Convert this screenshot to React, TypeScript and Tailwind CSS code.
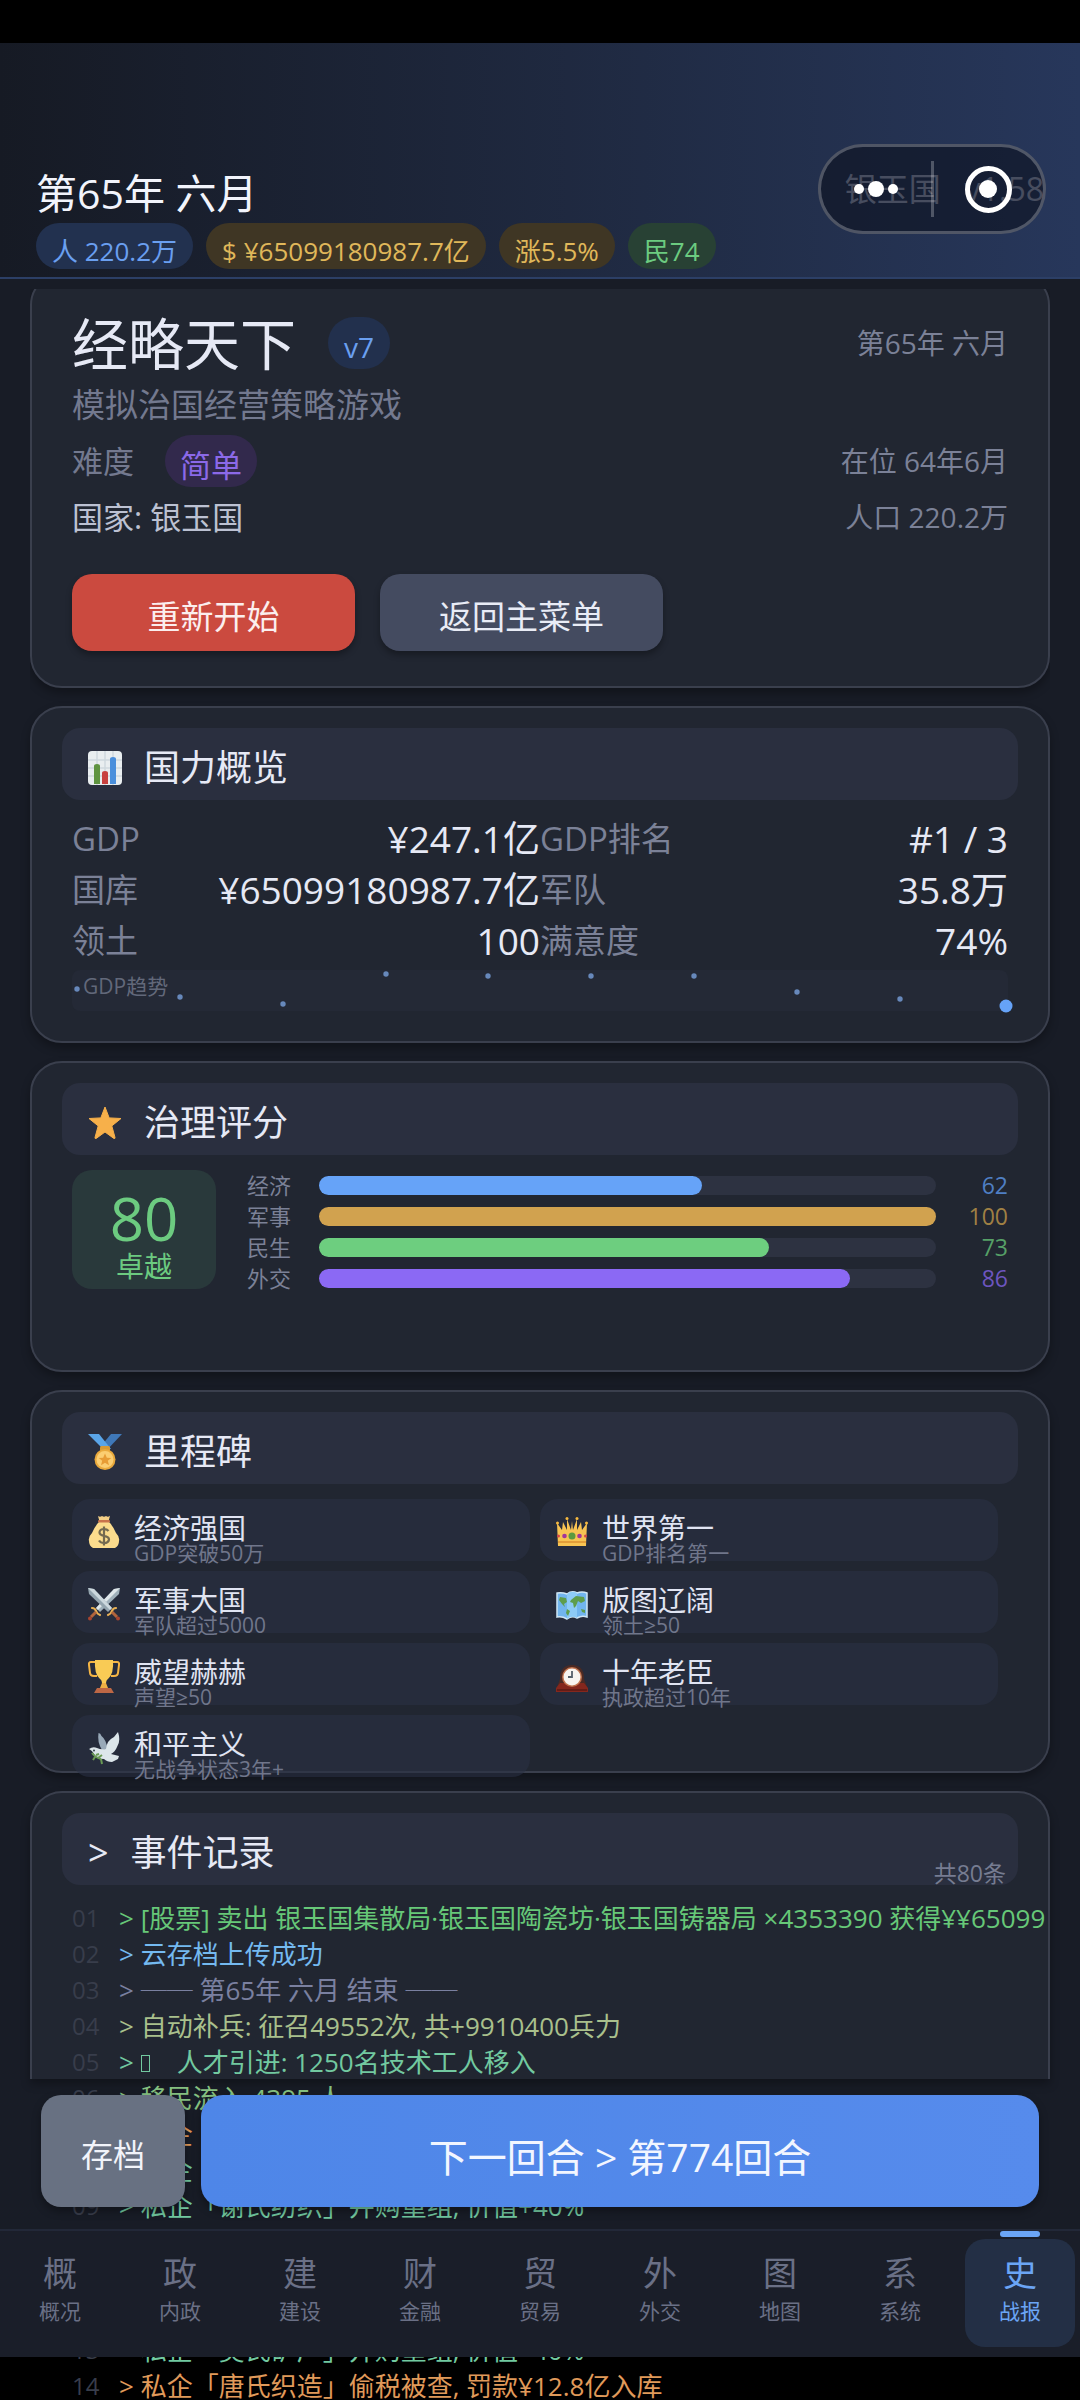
import type { ReactNode } from 'react'

const FONT = "font-['Open_Sans','Noto_Sans_CJK_SC',sans-serif]"

const pills = [
  { label: '人 220.2万', style: 'bg-[#22314f] text-[#6a9ff0]' },
  { label: '$ ¥65099180987.7亿', style: 'bg-[#3f3624] text-[#e0b85a]' },
  { label: '涨5.5%', style: 'bg-[#3f3624] text-[#e0b85a]' },
  { label: '民74', style: 'bg-[#284134] text-[#6ccb80]' },
]

const stats = [
  ['GDP', '¥247.1亿'],
  ['GDP排名', '#1 / 3'],
  ['国库', '¥65099180987.7亿'],
  ['军队', '35.8万'],
  ['领土', '100'],
  ['满意度', '74%'],
]

const trend = [
  [5, 19], [108, 27], [211, 34], [314, 4], [416, 6],
  [519, 6], [622, 6], [725, 22], [828, 29],
]

const scores = [
  { label: '经济', value: 62, bar: 'bg-[#66a3f8]', text: 'text-[#4f7fc4]' },
  { label: '军事', value: 100, bar: 'bg-[#d1a24f]', text: 'text-[#a08044]' },
  { label: '民生', value: 73, bar: 'bg-[#6dce7f]', text: 'text-[#56a067]' },
  { label: '外交', value: 86, bar: 'bg-[#8b69f4]', text: 'text-[#6d55bf]' },
]

const milestones = [
  { title: '经济强国', desc: 'GDP突破50万', icon: <MoneyBagIcon /> },
  { title: '世界第一', desc: 'GDP排名第一', icon: <CrownIcon /> },
  { title: '军事大国', desc: '军队超过5000', icon: <SwordsIcon /> },
  { title: '版图辽阔', desc: '领土≥50', icon: <MapIcon /> },
  { title: '威望赫赫', desc: '声望≥50', icon: <TrophyIcon /> },
  { title: '十年老臣', desc: '执政超过10年', icon: <ClockIcon /> },
  { title: '和平主义', desc: '无战争状态3年+', icon: <DoveIcon /> },
]

const GREEN = 'text-[#67c878]'
const BLUE = 'text-[#74b9f0]'
const GRAY = 'text-[#7a80a0]'
const OLIVE = 'text-[#a9c08c]'
const TEAL = 'text-[#72c9a0]'
const LIME = 'text-[#85c080]'
const ORANGE = 'text-[#e09a5a]'

const logs = [
  { text: '[股票] 卖出 银玉国集散局·银玉国陶瓷坊·银玉国铸器局 ×4353390 获得¥¥65099', color: GREEN },
  { text: '云存档上传成功', color: BLUE },
  { text: '── 第65年 六月 结束 ──', color: GRAY },
  { text: '自动补兵: 征召49552次, 共+9910400兵力', color: OLIVE },
  { text: '人才引进: 1250名技术工人移入', color: TEAL, missingGlyph: true },
  { text: '移民流入 4395 人', color: LIME },
  { text: '私企', color: ORANGE },
  { text: '私企', color: TEAL },
  { text: '私企「谢氏纺织」并购重组, 价值+40%', color: TEAL },
  { text: '', color: TEAL },
  { text: '', color: TEAL },
  { text: '', color: TEAL },
  { text: '私企「吴氏矿产」并购重组, 价值+40%', color: TEAL },
  { text: '私企「唐氏织造」偷税被查, 罚款¥12.8亿入库', color: ORANGE },
]

const tabs = [
  ['概', '概况'],
  ['政', '内政'],
  ['建', '建设'],
  ['财', '金融'],
  ['贸', '贸易'],
  ['外', '外交'],
  ['图', '地图'],
  ['系', '系统'],
  ['史', '战报'],
]

function ChartIcon() {
  return (
    <svg viewBox="0 0 34 34" className="size-[34px]" aria-hidden="true">
      <rect width="34" height="34" rx="4" fill="#e9eef0" />
      <path d="M0 9h34M0 17h34M0 25h34M9 0v34M17 0v34M25 0v34" stroke="#cfd9de" strokeWidth="1.5" />
      <path d="M6 33V15q0-2 3-2t3 2v18z" fill="#5f9441" />
      <path d="M14 33V22q0-2 3-2t3 2v11z" fill="#c8413f" />
      <path d="M22 33V8q0-2 3-2t3 2v25z" fill="#4a8fdc" />
    </svg>
  )
}

function StarIcon() {
  return (
    <svg viewBox="0 0 34 34" className="size-[34px]" aria-hidden="true">
      <path
        d="M17 1l4.200 10.900 11.800.6-9.200 7.400 3.200 11.600q.2 1.500-1.200.9L17 26l-8.800 6.400q-1.400.6-1.200-.9l3.200-11.600L1 12.500l11.800-.6z"
        fill="#f7b04a"
        stroke="#f7b04a"
        strokeLinejoin="round"
      />
    </svg>
  )
}

function MedalIcon() {
  return (
    <svg viewBox="0 0 34 36" className="h-9 w-[34px]" aria-hidden="true">
      <path d="M34 0H23L13 12l5 5z" fill="#3f78b8" />
      <path d="M0 0h11l12 15h-8z" fill="#5aa5e8" />
      <rect x="12" y="12" width="10" height="5" rx="1.5" fill="#d89a35" />
      <circle cx="17" cy="25.5" r="10.5" fill="#e9a93c" />
      <circle cx="17" cy="25.5" r="8.5" fill="#fbce72" />
      <path d="M17 19.500l1.800 4.200 4.500.3-3.500 2.800 1.200 4.400-4-2.400-4 2.400 1.200-4.400-3.500-2.800 4.500-.3z" fill="#e79c35" />
    </svg>
  )
}

function MoneyBagIcon() {
  return (
    <svg viewBox="0 0 32 34" className="h-[34px] w-8" aria-hidden="true">
      <path d="M10 1q2 1.500 4 0 2 1.500 4 0 2 1.500 4-.2l-1.500 5.700h-9z" fill="#f3cf86" />
      <path d="M11 7Q7 11 4 18q-4 4-3 8 0 5 4 7h22q4-2 4-7 1-4-3-8-3-7-7-11z" fill="#fbdc8d" />
      <rect x="10" y="5" width="12" height="2.500" rx="1.200" fill="#c9734c" />
      <path d="M20.500 16Q19 14 16 14q-4 0-4.500 3.200 0 2.800 4.500 3.600 5 .8 5 3.700-.5 3.500-5 3.500-3.500 0-5-2.500M16 11.500v19" fill="none" stroke="#746a50" strokeWidth="2.200" />
    </svg>
  )
}

function CrownIcon() {
  return (
    <svg viewBox="0 0 32 34" className="h-[34px] w-8" aria-hidden="true">
      <path d="M2 31L1 8l5 7 1-8 4 8 0-11 4 11 1-9 1 9 4-11 0 11 4-8 1 8 5-7-1 23z" fill="#f8c453" />
      <g fill="#f6b93f">
        <circle cx="1.5" cy="8" r="1.5" />
        <circle cx="11" cy="3.5" r="1.5" />
        <circle cx="21" cy="3.5" r="1.5" />
        <circle cx="30.5" cy="8" r="1.5" />
      </g>
      <path d="M2 27h28" stroke="#dc9231" strokeWidth="1.5" />
      <circle cx="16" cy="21" r="3.5" fill="#5c9a3f" />
      <circle cx="8.5" cy="21" r="2.3" fill="#a2359b" />
      <circle cx="23.5" cy="21" r="2.3" fill="#a2359b" />
      <circle cx="2.5" cy="21" r="1.5" fill="#d64848" />
      <circle cx="29.5" cy="21" r="1.5" fill="#d64848" />
    </svg>
  )
}

function SwordsIcon() {
  return (
    <svg viewBox="0 0 32 34" className="h-[34px] w-8" aria-hidden="true">
      <path d="M32 1l-1 6L12 25l-4-4L26 2z" fill="#9fb0ba" />
      <path d="M32 1L10 23l-2-2L26 2z" fill="#dfe7ea" />
      <path d="M0 1l1 6 19 18 4-4L6 2z" fill="#93a4ae" />
      <path d="M0 1l22 22 2-2L6 2z" fill="#ccd8dd" />
      <path d="M4 21q3 0 4 3t4 4M28 21q-3 0-4 3t-4 4" fill="none" stroke="#e8b055" strokeWidth="2.200" strokeLinecap="round" />
      <path d="M8 25l-5 5M24 25l5 5" stroke="#b0643c" strokeWidth="3" />
      <circle cx="2" cy="31.500" r="2" fill="#a8452f" />
      <circle cx="30" cy="31.500" r="2" fill="#a8452f" />
    </svg>
  )
}

function MapIcon() {
  return (
    <svg viewBox="0 0 32 34" className="h-[34px] w-8" aria-hidden="true">
      <path d="M1 6q5-1 10 1 5-4 10-1 5-2 10 0v24q-5-2-10 1-5-3-10 1-5-3-10-2z" fill="#71b5ee" stroke="#cfe6f5" strokeWidth="1.5" />
      <path d="M11 7q5-4 10-1v25q-5-3-10 1z" fill="#8dcbf7" />
      <path d="M4 10l6 1 1 4-3 2 1 3-3-3-3-4zM15 13l5-4 8 1 1 4-4 2-3-2-2 5-2 2-1-5-3-1zM11 22l3 2-2 5-2-3zM25 22l4 1v3l-3-1z" fill="#5e9d4c" />
    </svg>
  )
}

function TrophyIcon() {
  return (
    <svg viewBox="0 0 32 34" className="h-[34px] w-8" aria-hidden="true">
      <path d="M8 3H3Q.5 3 1 6l1 8q.3 3 4 3h3M24 3h5q2.500 0 2 3l-1 8q-.3 3-4 3h-3" fill="none" stroke="#f5b544" strokeWidth="2" />
      <path d="M7 1h18q1 14-5 19-2 1-2 5v3h-4v-3q0-4-2-5Q6 15 7 1z" fill="#f9cb55" />
      <path d="M14 24h4l2 5h-8z" fill="#eeb044" />
      <path d="M9 29h14l3 5H6z" fill="#bd6745" />
    </svg>
  )
}

function ClockIcon() {
  return (
    <svg viewBox="0 0 32 34" className="h-[34px] w-8" aria-hidden="true">
      <path d="M16 6q12 0 12 14l3 8H1l3-8Q4 6 16 6z" fill="#4b2a24" />
      <path d="M4 24h24l4 5v4H0v-4z" fill="#84271d" />
      <path d="M1 31h30" stroke="#5a1a14" strokeWidth="1.5" />
      <circle cx="16" cy="18" r="10" fill="#c0714c" />
      <circle cx="16" cy="18" r="8.5" fill="#f7f4f0" />
      <path d="M16 12v6h-4" fill="none" stroke="#55606a" strokeWidth="1.8" />
    </svg>
  )
}

function DoveIcon() {
  return (
    <svg viewBox="0 0 32 34" className="h-[34px] w-8" aria-hidden="true">
      <path d="M14 19Q9 11 10.500 2q2 0 3 3 5 4 6 13z" fill="#98a9b8" />
      <path d="M18 18q1-9 8-12l4-5q3 9-1 15-2 5-6 7l8 2-1 3-6 3q-5 0-8-3-8 0-10-5-1-3-5-5 4-3 8-1 4 2 9 1z" fill="#dce6ea" />
      <circle cx="6" cy="19.500" r="1" fill="#39444c" />
      <path d="M4 22q4 5 9 6M7 26l-2 3M10 27l4-3M13 28l1 5M8 24l3-1" fill="none" stroke="#6a9a55" strokeWidth="2" />
    </svg>
  )
}

function Card({ children, className = '' }: { children: ReactNode; className?: string }) {
  return (
    <section
      className={`shrink-0 border-2 border-[#3a3f4d] bg-[#212631] px-[30px] shadow-[0_5px_10px_rgba(0,0,0,0.3)] ${className}`}
    >
      {children}
    </section>
  )
}

function CardTitle({ icon, title, extra }: { icon: ReactNode; title: string; extra?: string }) {
  return (
    <div className="flex h-[72px] items-center gap-[22px] rounded-[18px] bg-[#2a2f3f] pl-[26px] pr-3 pt-2">
      {icon}
      <h2 className="text-[36px] leading-10 text-[#e6e9f5]">{title}</h2>
      {extra && <span className="ml-auto self-end text-[23px] leading-6 text-[#767c91]">{extra}</span>}
    </div>
  )
}

function Header() {
  return (
    <header className="relative border-b-2 border-[#2c3f66] bg-linear-to-r from-[#161a24] to-[#27375b] px-9 pb-2 pt-[126px]">
      <div className="flex items-start justify-between">
        <h1 className="text-[41px] leading-[48px] text-[#f2f4fc]">第65年 六月</h1>
        <p className="flex gap-6 text-[32px] leading-10 text-[#a0a7c0]">
          <span>银玉国</span>
          <span>v1.58</span>
        </p>
      </div>
      <ul className="mt-1.5 flex gap-[13px]">
        {pills.map(p => (
          <li key={p.label} className={`h-[46px] rounded-full px-4 pt-2 text-[26px] leading-10 ${p.style}`}>
            {p.label}
          </li>
        ))}
      </ul>
      <div className="absolute right-[34px] top-[101px] flex h-[90px] w-[228px] items-center rounded-full border-[3px] border-white/25 bg-[#0c101e]/60">
        <button type="button" aria-label="更多" className="flex flex-1 items-center justify-center gap-1">
          <i className="size-2.5 rounded-full bg-white" />
          <i className="size-4 rounded-full bg-white" />
          <i className="size-2.5 rounded-full bg-white" />
        </button>
        <i className="h-14 w-[3px] bg-white/25" />
        <button type="button" aria-label="关闭" className="flex flex-1 items-center justify-center">
          <span className="flex size-[47px] items-center justify-center rounded-full border-[5px] border-white">
            <i className="size-[18px] rounded-full bg-white" />
          </span>
        </button>
      </div>
    </header>
  )
}

function IntroCard() {
  return (
    <div className="shrink-0 overflow-hidden pb-4 -mb-4">
      <Card className="-mt-4 rounded-[32px] pb-[35px] pt-9">
        <div className="flex flex-col gap-2.5 px-2.5">
          <div className="flex h-16 items-center">
            <h2 className="text-[56px] leading-[64px] text-[#e6e9f5]">经略天下</h2>
            <span className="ml-8 h-[52px] rounded-full bg-[#22304d] px-4 pt-2 text-[28px] leading-[44px] text-[#6a9ff0]">v7</span>
            <span className="ml-auto text-[28px] leading-10 text-[#7b8197]">第65年 六月</span>
          </div>
          <p className="text-[33px] leading-10 text-[#73798f]">模拟治国经营策略游戏</p>
          <div className="flex items-center text-[31px]">
            <span className="text-[#73798f]">难度</span>
            <span className="ml-[31px] h-[52px] rounded-full bg-[#32294c] px-[15px] pt-2 leading-[44px] text-[#8b69e8]">简单</span>
            <span className="ml-auto text-[28px] leading-10 text-[#7b8197]">在位 64年6月</span>
          </div>
          <div className="flex items-center justify-between leading-10">
            <span className="text-[31px] text-[#bcc1d2]">国家: 银玉国</span>
            <span className="text-[28px] text-[#7b8197]">人口 220.2万</span>
          </div>
          <div className="mt-[27px] flex gap-[25px] text-[33px]">
            <button type="button" className="h-[77px] w-[283px] rounded-[20px] bg-[#cb4a3f] pt-2 text-[#fbeeee] shadow-[0_4px_6px_rgba(0,0,0,0.3)]">
              重新开始
            </button>
            <button type="button" className="h-[77px] w-[283px] rounded-[20px] bg-[#444b60] pt-2 text-[#e9ecf6] shadow-[0_4px_6px_rgba(0,0,0,0.3)]">
              返回主菜单
            </button>
          </div>
        </div>
      </Card>
    </div>
  )
}

function OverviewCard() {
  return (
    <Card className="rounded-[32px] pb-[30px] pt-5">
      <CardTitle icon={<ChartIcon />} title="国力概览" />
      <div className="px-2.5">
        <dl className="mt-[13px] grid grid-cols-2">
          {stats.map(([label, value]) => (
            <div key={label} className="flex h-[51px] items-center justify-between">
              <dt className="text-[33px] text-[#7b8197]">{label}</dt>
              <dd className="text-[37px] text-[#e6e9f5]">{value}</dd>
            </div>
          ))}
        </dl>
        <div className="relative mt-1 h-[41px] rounded-lg bg-[#242936]">
          <span className="absolute left-[11px] top-0.5 text-[21px] leading-7 text-[#62687a]">GDP趋势</span>
          <svg viewBox="0 0 936 41" className="h-full w-full overflow-visible" aria-hidden="true">
            {trend.map(([x, y]) => (
              <circle key={x} cx={x} cy={y} r="2.7" fill="#6788bb" />
            ))}
            <circle cx="934" cy="36" r="6.5" fill="#66a3f8" />
          </svg>
        </div>
      </div>
    </Card>
  )
}

function ScoreCard() {
  return (
    <Card className="rounded-[32px] pb-[76px] pt-5">
      <CardTitle icon={<StarIcon />} title="治理评分" />
      <div className="mt-[15px] flex items-start gap-[31px] px-2.5">
        <div className="flex h-[119px] w-36 flex-col items-center rounded-[20px] bg-[#29393b] pt-[18px] text-[#6ccb80]">
          <span className="text-[60px] leading-[60px]">80</span>
          <span className="text-[28px] leading-9">卓越</span>
        </div>
        <ul className="flex-1">
          {scores.map(s => (
            <li key={s.label} className="flex h-[31px] items-center">
              <span className="w-[72px] text-[22px] text-[#7b8197]">{s.label}</span>
              <div className="h-[19px] flex-1 rounded-full bg-[#2d3241]">
                <div className={`h-full rounded-full ${s.bar}`} style={{ width: `${s.value}%` }} />
              </div>
              <span className={`w-[72px] text-right text-[23px] ${s.text}`}>{s.value}</span>
            </li>
          ))}
        </ul>
      </div>
    </Card>
  )
}

function MilestoneCard() {
  return (
    <Card className="rounded-[32px] pt-5">
      <CardTitle icon={<MedalIcon />} title="里程碑" />
      {/* the last row runs over the card's lower edge */}
      <ul className="-mb-1.5 mt-[15px] grid grid-cols-2 gap-2.5 pl-2.5 pr-5">
        {milestones.map(m => (
          <li key={m.title} className="flex h-[62px] items-start gap-3.5 rounded-[18px] bg-[#2a3044]/60 px-4 pt-3.5">
            <span className="pt-0.5">{m.icon}</span>
            <div>
              <h3 className="text-[28px] leading-[30px] text-[#e0e4f2]">{m.title}</h3>
              <p className="text-[21px] leading-5 text-[#70768b]">{m.desc}</p>
            </div>
          </li>
        ))}
      </ul>
    </Card>
  )
}

function LogCard() {
  return (
    <Card className="min-h-0 flex-1 overflow-x-clip rounded-t-[32px] border-b-0 pt-5">
      <CardTitle icon={<span className="text-[36px] leading-10 text-[#e6e9f5]">&gt;</span>} title="事件记录" extra="共80条" />
      <ol className="mt-[15px] px-2.5">
        {logs.map((log, i) => (
          <li key={i} className="flex h-9 items-center whitespace-nowrap">
            <span className="w-[47px] shrink-0 text-2xl text-[#383d4b]">{String(i + 1).padStart(2, '0')}</span>
            <span className={`text-[26px] ${log.color}`}>
              &gt;{' '}
              {log.missingGlyph && <i className="mr-[27px] inline-block h-[17px] w-[9px] border border-current" />}
              {log.text}
            </span>
          </li>
        ))}
      </ol>
    </Card>
  )
}

function BottomBar() {
  return (
    <div className="absolute inset-x-0 bottom-0">
      <div className="flex gap-4 px-[41px] pb-[22px]">
        <button type="button" className="h-28 w-36 rounded-[20px] bg-[#687182] pt-2 text-[32px] text-[#f2f4fa] shadow-[0_4px_8px_rgba(0,0,0,0.35)]">
          存档
        </button>
        <button type="button" className="h-28 flex-1 rounded-[22px] bg-linear-to-r from-[#4e86e8] to-[#568bec] pt-3 text-[39px] text-[#f2f6ff] shadow-[0_4px_8px_rgba(0,0,0,0.35)]">
          下一回合 &gt; 第774回合
        </button>
      </div>
      <nav className="grid grid-cols-9 border-t-2 border-[#222838] bg-[#1a1e29] pb-2.5 pt-2">
        {tabs.map(([mark, label]) => {
          const active = label === '战报'
          return (
            <a
              key={label}
              href="#"
              className={`relative mx-[5px] flex h-[108px] flex-col items-center gap-1.5 rounded-[20px] pt-3.5 ${
                active ? 'bg-[#232f45] text-[#6ba5f5]' : 'text-[#6a7086]'
              }`}
            >
              {active && <i className="absolute -top-2 h-1.5 w-10 rounded-full bg-[#6ba5f5]" />}
              <span className="text-[34px] leading-10">{mark}</span>
              <span className="text-[21px] leading-6">{label}</span>
            </a>
          )
        })}
      </nav>
    </div>
  )
}

export default function App() {
  return (
    <div lang="zh-CN" className={`flex h-screen flex-col overflow-hidden bg-black pt-[43px] ${FONT}`}>
      <Header />
      <main className="relative mb-[43px] flex min-h-0 flex-1 flex-col gap-[18px] bg-[#181c26] px-[30px] pb-[278px] pt-2.5">
        <IntroCard />
        <OverviewCard />
        <ScoreCard />
        <MilestoneCard />
        <LogCard />
        <BottomBar />
      </main>
    </div>
  )
}
